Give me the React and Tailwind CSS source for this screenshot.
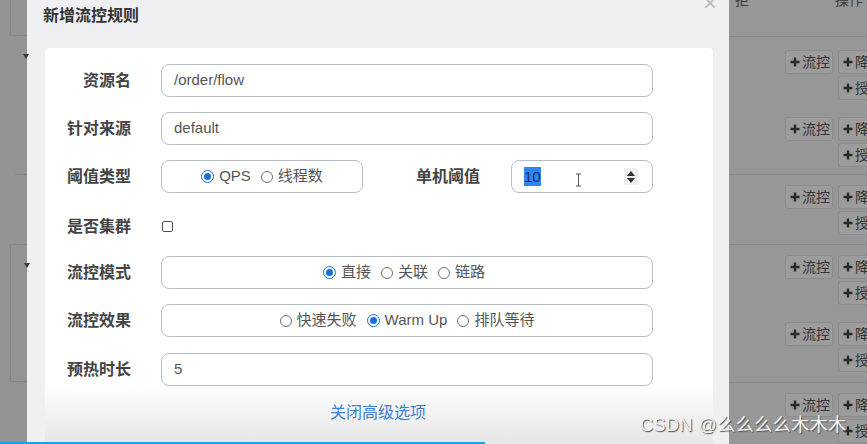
import React from "react";

const cjk = "font-['Liberation_Sans','Noto_Sans_CJK_SC',sans-serif]";

function Radio({ checked, label }) {
  return (
    <span className="flex items-center gap-[5px]">
      {checked ? (
        <span className="flex h-[13px] w-[13px] items-center justify-center rounded-full border-[1.5px] border-[#1a6fe0] bg-white">
          <span className="h-[7px] w-[7px] rounded-full bg-[#1a6fe0]" />
        </span>
      ) : (
        <span className="h-[12px] w-[12px] rounded-full border border-[#6f6f6f] bg-white" />
      )}
      <span className="text-[15px] text-[#555]">{label}</span>
    </span>
  );
}

function Label({ children }) {
  return (
    <div className="w-[86px] shrink-0 text-right text-[16px] font-bold text-[#444]">
      {children}
    </div>
  );
}

function Box({ children, className = "" }) {
  return (
    <div
      className={
        "flex h-[33px] items-center rounded-[8px] border border-[#b9bdc6] bg-white " +
        className
      }
    >
      {children}
    </div>
  );
}

function Plus() {
  return (
    <svg width="10" height="10" viewBox="0 0 10 10" className="shrink-0">
      <path d="M5 0.5v9M0.5 5h9" stroke="#2a2a2a" strokeWidth="2.4" />
    </svg>
  );
}

function TBtn({ label, className = "" }) {
  return (
    <div
      className={
        "flex h-[24px] shrink-0 items-center gap-[2px] whitespace-nowrap rounded-[3px] border border-[#8c8c8c] bg-[#9c9c9c] px-[4px] text-[14px] text-[#333] " +
        className
      }
    >
      <Plus />
      <span>{label}</span>
    </div>
  );
}

function Entry({ top }) {
  return (
    <div className="flex gap-[5px] pl-[56px]" style={{ paddingTop: top }}>
      <TBtn label="流控" className="w-[48px]" />
      <div className="flex flex-col gap-[2px]">
        <TBtn label="降" className="w-[40px] rounded-r-none border-r-0" />
        <TBtn label="授" className="w-[40px] rounded-r-none border-r-0" />
      </div>
    </div>
  );
}

export default function App() {
  return (
    <div
      className={
        "relative flex h-[444px] w-[867px] overflow-hidden bg-[#959595] " + cjk
      }
    >
      {/* left backdrop strip */}
      <div className="relative w-[27px] shrink-0 bg-[#939393]">
        <div className="ml-[10px] h-[36px] border-l border-b border-[#868686]" />
        <div className="ml-[23px] mt-[18px] h-0 w-0 border-x-[3px] border-t-[5px] border-x-transparent border-t-[#3a3a3a]" />
        <div className="ml-[15px] mt-[115px] h-0 border-t border-[#868686]" />
        <div className="ml-[10px] mt-[69px] h-[138px] border-l border-y border-[#868686]">
          <div className="ml-[13px] mt-[18px] h-0 w-0 border-x-[3px] border-t-[5px] border-x-transparent border-t-[#3a3a3a]" />
        </div>
      </div>

      {/* modal */}
      <div className="flex w-[702px] shrink-0 flex-col bg-[#f0f0f2]">
        <div className="flex h-[48px] shrink-0 items-start justify-between pl-[16px] pr-[12px]">
          <div className="mt-[4px] text-[16px] font-bold text-[#333]">新增流控规则</div>
          <div className="-mt-[9px] text-[24px] font-light leading-none text-[#b9b9b9]">×</div>
        </div>
        <div className="ml-[18px] mr-[16px] flex flex-1 flex-col rounded-t-[4px] bg-linear-to-b from-white from-85% to-[#e6e6e6] pt-[16px] pr-[60px]">
          <div className="flex items-center">
            <Label>资源名</Label>
            <Box className="ml-[30px] flex-1 pl-[12px]">
              <span className="text-[15px] text-[#555]">/order/flow</span>
            </Box>
          </div>

          <div className="mt-[15px] flex items-center">
            <Label>针对来源</Label>
            <Box className="ml-[30px] flex-1 pl-[12px]">
              <span className="text-[15px] text-[#555]">default</span>
            </Box>
          </div>

          <div className="mt-[15px] flex items-center">
            <Label>阈值类型</Label>
            <Box className="ml-[30px] w-[202px] justify-center gap-[10px]">
              <Radio checked label="QPS" />
              <Radio label="线程数" />
            </Box>
            <div className="ml-[53px] w-[64px] text-[16px] font-bold text-[#444]">单机阈值</div>
            <Box className="ml-[31px] flex-1 justify-between pl-[12px] pr-[14px]">
              <span className="flex flex-1 items-center">
                <span className="bg-[#2f86f0] text-[15px] leading-[19px] text-[#10306a]">10</span>
                <svg width="7" height="14" viewBox="0 0 7 14" className="ml-[34px] mt-[7px]">
                  <path d="M1 1h5M3.5 1v12M1 13h5" stroke="#555" strokeWidth="1" fill="none" />
                </svg>
              </span>
              <span className="flex h-[17px] w-[14px] flex-col items-center justify-center gap-[2px] bg-[#efefef]">
                <svg width="8" height="5" viewBox="0 0 8 5">
                  <path d="M4 0L8 5H0z" fill="#333" />
                </svg>
                <svg width="8" height="5" viewBox="0 0 8 5">
                  <path d="M0 0H8L4 5z" fill="#333" />
                </svg>
              </span>
            </Box>
          </div>

          <div className="mt-[17px] flex h-[33px] items-center">
            <Label>是否集群</Label>
            <span className="ml-[31px] h-[11px] w-[11px] rounded-[2px] border border-[#555] bg-white" />
          </div>

          <div className="mt-[13px] flex items-center">
            <Label>流控模式</Label>
            <Box className="ml-[30px] flex-1 justify-center gap-[10px] pr-[6px]">
              <Radio checked label="直接" />
              <Radio label="关联" />
              <Radio label="链路" />
            </Box>
          </div>

          <div className="mt-[15px] flex items-center">
            <Label>流控效果</Label>
            <Box className="ml-[30px] flex-1 justify-center gap-[10px]">
              <Radio label="快速失败" />
              <Radio checked label="Warm Up" />
              <Radio label="排队等待" />
            </Box>
          </div>

          <div className="mt-[16px] flex items-center">
            <Label>预热时长</Label>
            <Box className="ml-[30px] flex-1 pl-[12px]">
              <span className="text-[15px] text-[#555]">5</span>
            </Box>
          </div>

          <div className="mt-[15px] pl-[285px] text-[16px] text-[#3d7fd6]">关闭高级选项</div>
        </div>
      </div>

      {/* right backdrop table */}
      <div className="flex min-w-0 flex-1 flex-col overflow-hidden bg-[#979797]">
        <div className="flex h-[37px] shrink-0 justify-between border-b border-[#898989] pl-[6px] pr-[4px] text-[14px] text-[#3a3a3a]">
          <span className="-mt-[10px]">拒</span>
          <span className="-mt-[10px] whitespace-nowrap">操作</span>
        </div>
        <div className="h-[138px] shrink-0 border-b border-[#898989]">
          <Entry top={13} />
          <Entry top={17} />
        </div>
        <div className="h-[70px] shrink-0 border-b border-[#898989]">
          <Entry top={10} />
        </div>
        <div className="h-[138px] shrink-0 border-b border-[#898989]">
          <Entry top={10} />
          <Entry top={17} />
        </div>
        <div className="shrink-0">
          <Entry top={10} />
        </div>
      </div>

      {/* watermark */}
      <div className="absolute left-[640px] top-[412px] text-[18px] tracking-[0.5px] text-[#f4f4f4] [text-shadow:1px_1px_1px_#555]">
        CSDN @么么么么木木木
      </div>

      {/* video progress bar */}
      <div className="absolute bottom-0 left-0 h-[2px] w-[485px] bg-[#1fa0e2]" />
    </div>
  );
}
